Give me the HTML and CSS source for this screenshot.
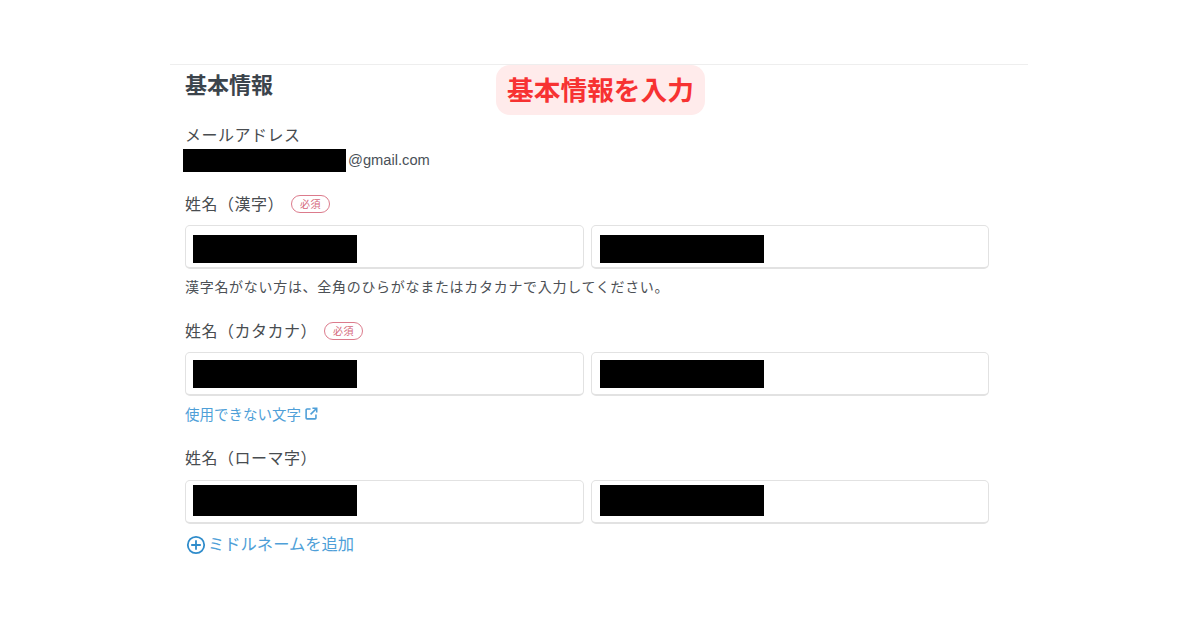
FILE: index.html
```html
<!DOCTYPE html>
<html lang="ja">
<head>
<meta charset="utf-8">
<title>基本情報</title>
<link rel="stylesheet" href="styles.css">
</head>
<body>
<main class="panel">
  <h2 class="heading">基本情報</h2>
  <div class="callout">基本情報を入力</div>

  <section class="email-block">
    <div class="label">メールアドレス</div>
    <div class="email"><span class="redact redact-email"></span>@gmail.com</div>
  </section>

  <section class="field field-kanji">
    <div class="label">姓名（漢字）<span class="badge">必須</span></div>
    <div class="inputs">
      <div class="input"><span class="redact"></span></div>
      <div class="input"><span class="redact"></span></div>
    </div>
    <p class="help">漢字名がない方は、全角のひらがなまたはカタカナで入力してください。</p>
  </section>

  <section class="field field-kana">
    <div class="label">姓名（カタカナ）<span class="badge">必須</span></div>
    <div class="inputs">
      <div class="input"><span class="redact"></span></div>
      <div class="input"><span class="redact"></span></div>
    </div>
    <a class="link-small">使用できない文字<svg class="ext" viewBox="0 0 14 14" width="14" height="14" fill="none" stroke="currentColor" stroke-width="1.7"><path d="M6 2.2H2.2a1 1 0 0 0-1 1v8.6a1 1 0 0 0 1 1h8.6a1 1 0 0 0 1-1V8"/><path d="M8 1.4h4.6V6M12.4 1.6 6 8"/></svg></a>
  </section>

  <section class="field field-roman">
    <div class="label">姓名（ローマ字）</div>
    <div class="inputs">
      <div class="input"><span class="redact redact-tall"></span></div>
      <div class="input"><span class="redact redact-tall"></span></div>
    </div>
    <a class="link-add"><svg class="plus" viewBox="0 0 20 20" width="20" height="20" fill="none" stroke="currentColor" stroke-width="1.8"><circle cx="10" cy="10" r="8.2"/><path d="M10 5.2v9.6M5.2 10h9.6"/></svg>ミドルネームを追加</a>
  </section>
</main>
</body>
</html>
```
FILE: styles.css
```css
* { box-sizing: border-box; }
html, body { margin: 0; padding: 0; background: #fff; }
body {
  width: 1200px;
  height: 630px;
  overflow: hidden;
  padding: 64px 172px 0 170px;
  font-family: "Noto Sans CJK JP", "Noto Sans", sans-serif;
  color: #454a4f;
}
.panel {
  position: relative;
  height: 520px;
  padding: 0 39px 0 15px;
  border-top: 1px solid #eeeeee;
}
.heading {
  margin: 3px 0 0;
  font-size: 22px;
  line-height: 30px;
  font-weight: 700;
  color: #3c444c;
}
.callout {
  position: absolute;
  left: 326px;
  top: 0;
  width: 209px;
  height: 50px;
  border-radius: 14px;
  background: #ffebeb;
  color: #f73232;
  font-size: 26.7px;
  font-weight: 700;
  line-height: 48px;
  text-align: center;
}
.label {
  display: flex;
  align-items: center;
  font-size: 16px;
  letter-spacing: 0.5px;
  line-height: 22px;
  color: #484c50;
}
.email-block { margin-top: 25px; }
.email {
  display: flex;
  align-items: center;
  height: 26px;
  margin-top: 2px;
  margin-left: -2px;
  font-family: "Liberation Sans", Arial, sans-serif;
  font-size: 14.7px;
  color: #4a5158;
}
.redact {
  display: block;
  width: 164px;
  height: 28px;
  background: #000;
}
.redact-email {
  width: 163px;
  height: 23px;
  margin-right: 2px;
}
.redact-tall { height: 31px; }
.field-kanji { margin-top: 19px; }
.field-kana { margin-top: 23px; }
.field-roman { margin-top: 23px; }
.badge {
  margin: 2px 0 0 7px;
  width: 39px;
  height: 18px;
  border: 1px solid #dc7b8c;
  border-radius: 9px;
  color: #d5677a;
  font-size: 10px;
  line-height: 16px;
  letter-spacing: 0.5px;
  text-align: center;
}
.inputs {
  display: flex;
  gap: 7px;
  margin-top: 11px;
}
.input {
  display: flex;
  align-items: flex-start;
  width: 399px;
  height: 44px;
  padding: 7px 0 0 7px;
  border: 1px solid #e2e2e2;
  border-bottom-width: 2px;
  border-radius: 5px;
  background: #fff;
}
.input + .input { padding-left: 8px; }
.field-kanji .input { padding-top: 9px; }
.field-roman .inputs { margin-top: 12px; }
.field-roman .input { padding-top: 4px; }
.help {
  margin: 7px 0 0;
  font-size: 14px;
  letter-spacing: 0.7px;
  line-height: 20px;
  color: #4c5055;
}
.link-small {
  display: flex;
  align-items: center;
  margin-top: 7px;
  height: 20px;
  font-size: 14.5px;
  color: #4f9fd8;
}
.ext { margin: 1px 0 0 4px; width: 13px; height: 13px; }
.link-add {
  display: flex;
  align-items: center;
  margin-top: 8px;
  height: 22px;
  font-size: 16.3px;
  color: #4f9fd8;
}
.plus { margin: 3px 2px 0 1px; color: #2f8ccb; }
```
